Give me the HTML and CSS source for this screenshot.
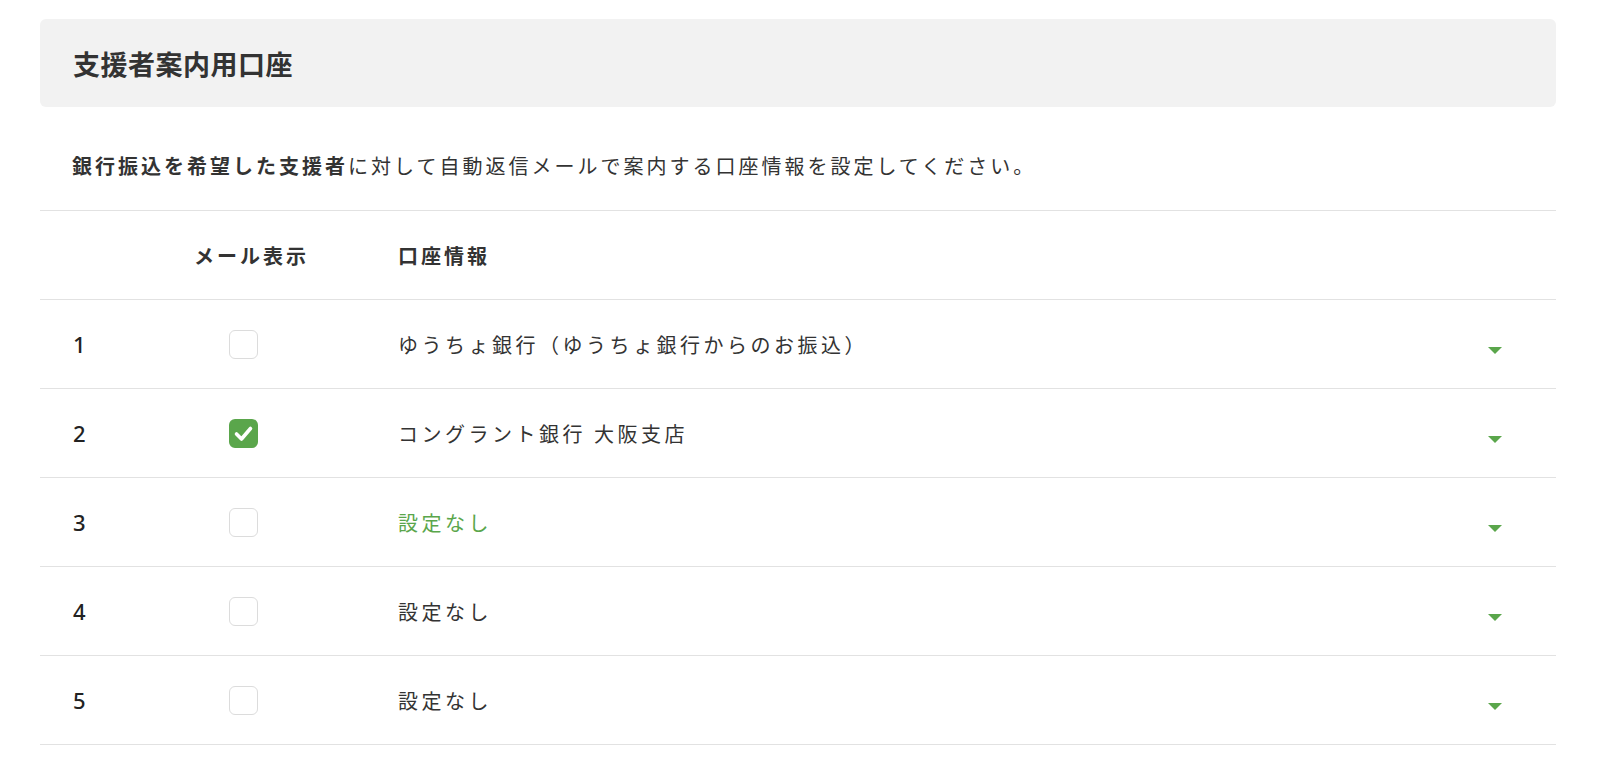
FILE: index.html
```html
<!DOCTYPE html>
<html lang="ja">
<head>
  <meta charset="utf-8" />
  <title>支援者案内用口座</title>
  <link rel="stylesheet" href="styles.css">
</head>
<body>
  <div class="page">
    <div class="section-head">
      <h2>支援者案内用口座</h2>
    </div>
    <p class="lead"><b>銀行振込を希望した支援者</b>に対して自動返信メールで案内する口座情報を設定してください。</p>

    <div class="acct-table">
      <div class="acct-row acct-head">
        <div class="col-no"></div>
        <div class="col-mail">メール表示</div>
        <div class="col-info">口座情報</div>
        <div class="col-caret"></div>
      </div>
      <!-- 口座 1〜5 -->
      <div class="acct-row">
        <div class="col-no">1</div>
        <div class="col-mail"><span class="check"></span></div>
        <div class="col-info">ゆうちょ銀行（ゆうちょ銀行からのお振込）</div>
        <div class="col-caret"><span class="caret"></span></div>
      </div>
      <div class="acct-row">
        <div class="col-no">2</div>
        <div class="col-mail">
          <span class="check is-checked">
            <svg viewBox="0 0 29 29" width="29" height="29"><polyline points="7.5,15 12.5,20 21.5,9.5" fill="none" stroke="#fff" stroke-width="3.6" stroke-linecap="round" stroke-linejoin="round"/></svg>
          </span>
        </div>
        <div class="col-info">コングラント銀行 大阪支店</div>
        <div class="col-caret"><span class="caret"></span></div>
      </div>
      <div class="acct-row">
        <div class="col-no">3</div>
        <div class="col-mail"><span class="check"></span></div>
        <div class="col-info is-active">設定なし</div>
        <div class="col-caret"><span class="caret"></span></div>
      </div>
      <div class="acct-row">
        <div class="col-no">4</div>
        <div class="col-mail"><span class="check"></span></div>
        <div class="col-info">設定なし</div>
        <div class="col-caret"><span class="caret"></span></div>
      </div>
      <div class="acct-row">
        <div class="col-no">5</div>
        <div class="col-mail"><span class="check"></span></div>
        <div class="col-info">設定なし</div>
        <div class="col-caret"><span class="caret"></span></div>
      </div>
    </div>
  </div>
</body>
</html>
```

FILE: styles.css
```css
:root {
  --text-color: #333333;
  --green: #5aa64b;
  --line-color: #e2e2e2;
  --head-bg: #f2f2f2;
}
body {
  margin: 0;
  background: #ffffff;
  color: var(--text-color);
  font-family: "Noto Sans CJK JP", "Noto Sans", sans-serif;
}
.page {
  padding: 19px 44px 0 40px;
}
.section-head {
  height: 88px;
  display: flex;
  align-items: center;
  padding-left: 33px;
  background: var(--head-bg);
  border-radius: 6px;
}
.section-head h2 {
  margin: 0;
  font-size: 27px;
  font-weight: 600;
  letter-spacing: 0.5px;
}
.lead {
  margin: 44px 0 29px 32px;
  font-size: 20px;
  line-height: 30px;
  letter-spacing: 3px;
}
.lead b {
  font-weight: 700;
}

/* account table */
.acct-table {
  border-top: 1px solid var(--line-color);
}
.acct-row {
  display: grid;
  grid-template-columns: 121px 100px 1fr 14px;
  align-items: center;
  height: 88px;
  padding: 0 54px 0 33px;
  border-bottom: 1px solid var(--line-color);
  font-size: 20px;
  letter-spacing: 3.5px;
  white-space: nowrap;
}
.acct-head {
  font-weight: 700;
  letter-spacing: 3px;
}
.col-no {
  font-family: "Noto Sans", "Noto Sans CJK JP", sans-serif;
  font-size: 22px;
  font-weight: 500;
  letter-spacing: 0;
  color: #222;
}
.col-mail {
  display: flex;
}
.col-info {
  padding-left: 104px;
}
.col-info.is-active {
  color: var(--green);
}
.check {
  display: block;
  width: 29px;
  height: 29px;
  margin-left: 35px;
  box-sizing: border-box;
  border: 1px solid #dcdcdc;
  border-radius: 6px;
  background: #fff;
}
.check.is-checked {
  border: none;
  background: var(--green);
}
.check svg {
  display: block;
}
.col-caret {
  display: flex;
  justify-content: center;
}
.caret {
  width: 0;
  height: 0;
  margin-top: 12px;
  border-left: 7px solid transparent;
  border-right: 7px solid transparent;
  border-top: 7px solid var(--green);
}
```
